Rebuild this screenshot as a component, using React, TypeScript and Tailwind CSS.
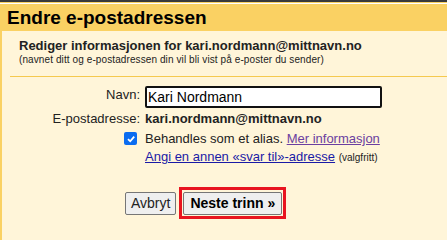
import React from 'react';

const App: React.FC = () => {
  return (
    <div className="w-[447px] h-[240px] overflow-hidden bg-[#fff5d9] font-['Liberation_Sans',Arial,sans-serif] text-black">
      <div className="h-[2px] bg-[#3a3a3a]" />
      <div className="h-[1px] bg-[#fad163]" />
      <div className="h-[1px] bg-white" />
      <div className="flex h-[237px] border-l-2 border-[#fad163]">
        <div className="flex-1 flex flex-col">
          <div className="h-[27px] bg-[#fad163] pl-[5px] pt-[3px]">
            <h1 className="text-[19px] leading-[21px] font-bold">Endre e-postadressen</h1>
          </div>

          <div className="pl-[17px] pt-[8px]">
            <div className="text-[13px] leading-[14px] font-bold text-[#222]">
              Rediger informasjonen for kari.nordmann@mittnavn.no
            </div>
            <div className="text-[10px] leading-[12px] mt-[1px] text-[#222] tracking-[0.1px]">
              (navnet ditt og e-postadressen din vil bli vist på e-poster du sender)
            </div>
          </div>

          <div className="ml-[8px] mt-[10px] h-[1px] bg-[#f5c94f]" />

          <div className="mt-[9px] grid grid-cols-[138px_1fr] gap-x-[5px] text-[13px] leading-[15px] text-[#222]">
            <div className="text-right pt-[1px]">Navn:</div>
            <div>
              <div className="w-[237px] h-[22px] border-2 border-[#111] rounded-[2px] bg-white px-[1px] flex items-center text-[14px] text-black">
                Kari Nordmann
              </div>
            </div>

            <div className="text-right mt-[3px]">E-postadresse:</div>
            <div className="mt-[3px] font-bold">kari.nordmann@mittnavn.no</div>

            <div className="flex justify-end items-center mt-[5px] pr-[3px]">
              <span className="w-[13px] h-[13px] rounded-[2px] bg-[#0b6cf0] flex items-center justify-center">
                <svg width="10" height="10" viewBox="0 0 10 10">
                  <path d="M2 5.2 L4.2 7.3 L8.2 2.6" stroke="white" strokeWidth="1.8" fill="none" />
                </svg>
              </span>
            </div>
            <div className="mt-[5px]">
              Behandles som et alias.{' '}
              <a className="text-[#6b3fa0] underline">Mer informasjon</a>
            </div>

            <div />
            <div className="mt-[3px]">
              <a className="text-[#1a1aa6] underline">Angi en annen «svar til»-adresse</a>{' '}
              <span className="text-[10px]">(valgfritt)</span>
            </div>
          </div>

          <div className="mt-[22px] pl-[123px] flex items-center gap-[3px]">
            <button className="h-[23px] px-[5px] border border-[#767676] rounded-[2px] bg-[#efefef] text-[14px] text-[#222]">
              Avbryt
            </button>
            <div className="border-[3px] border-[#e8141f] p-[1px]">
              <button className="h-[23px] px-[6px] border border-[#767676] rounded-[2px] bg-[#efefef] text-[14px] font-bold text-black">
                Neste trinn »
              </button>
            </div>
          </div>
        </div>
      </div>
    </div>
  );
};

export default App;
